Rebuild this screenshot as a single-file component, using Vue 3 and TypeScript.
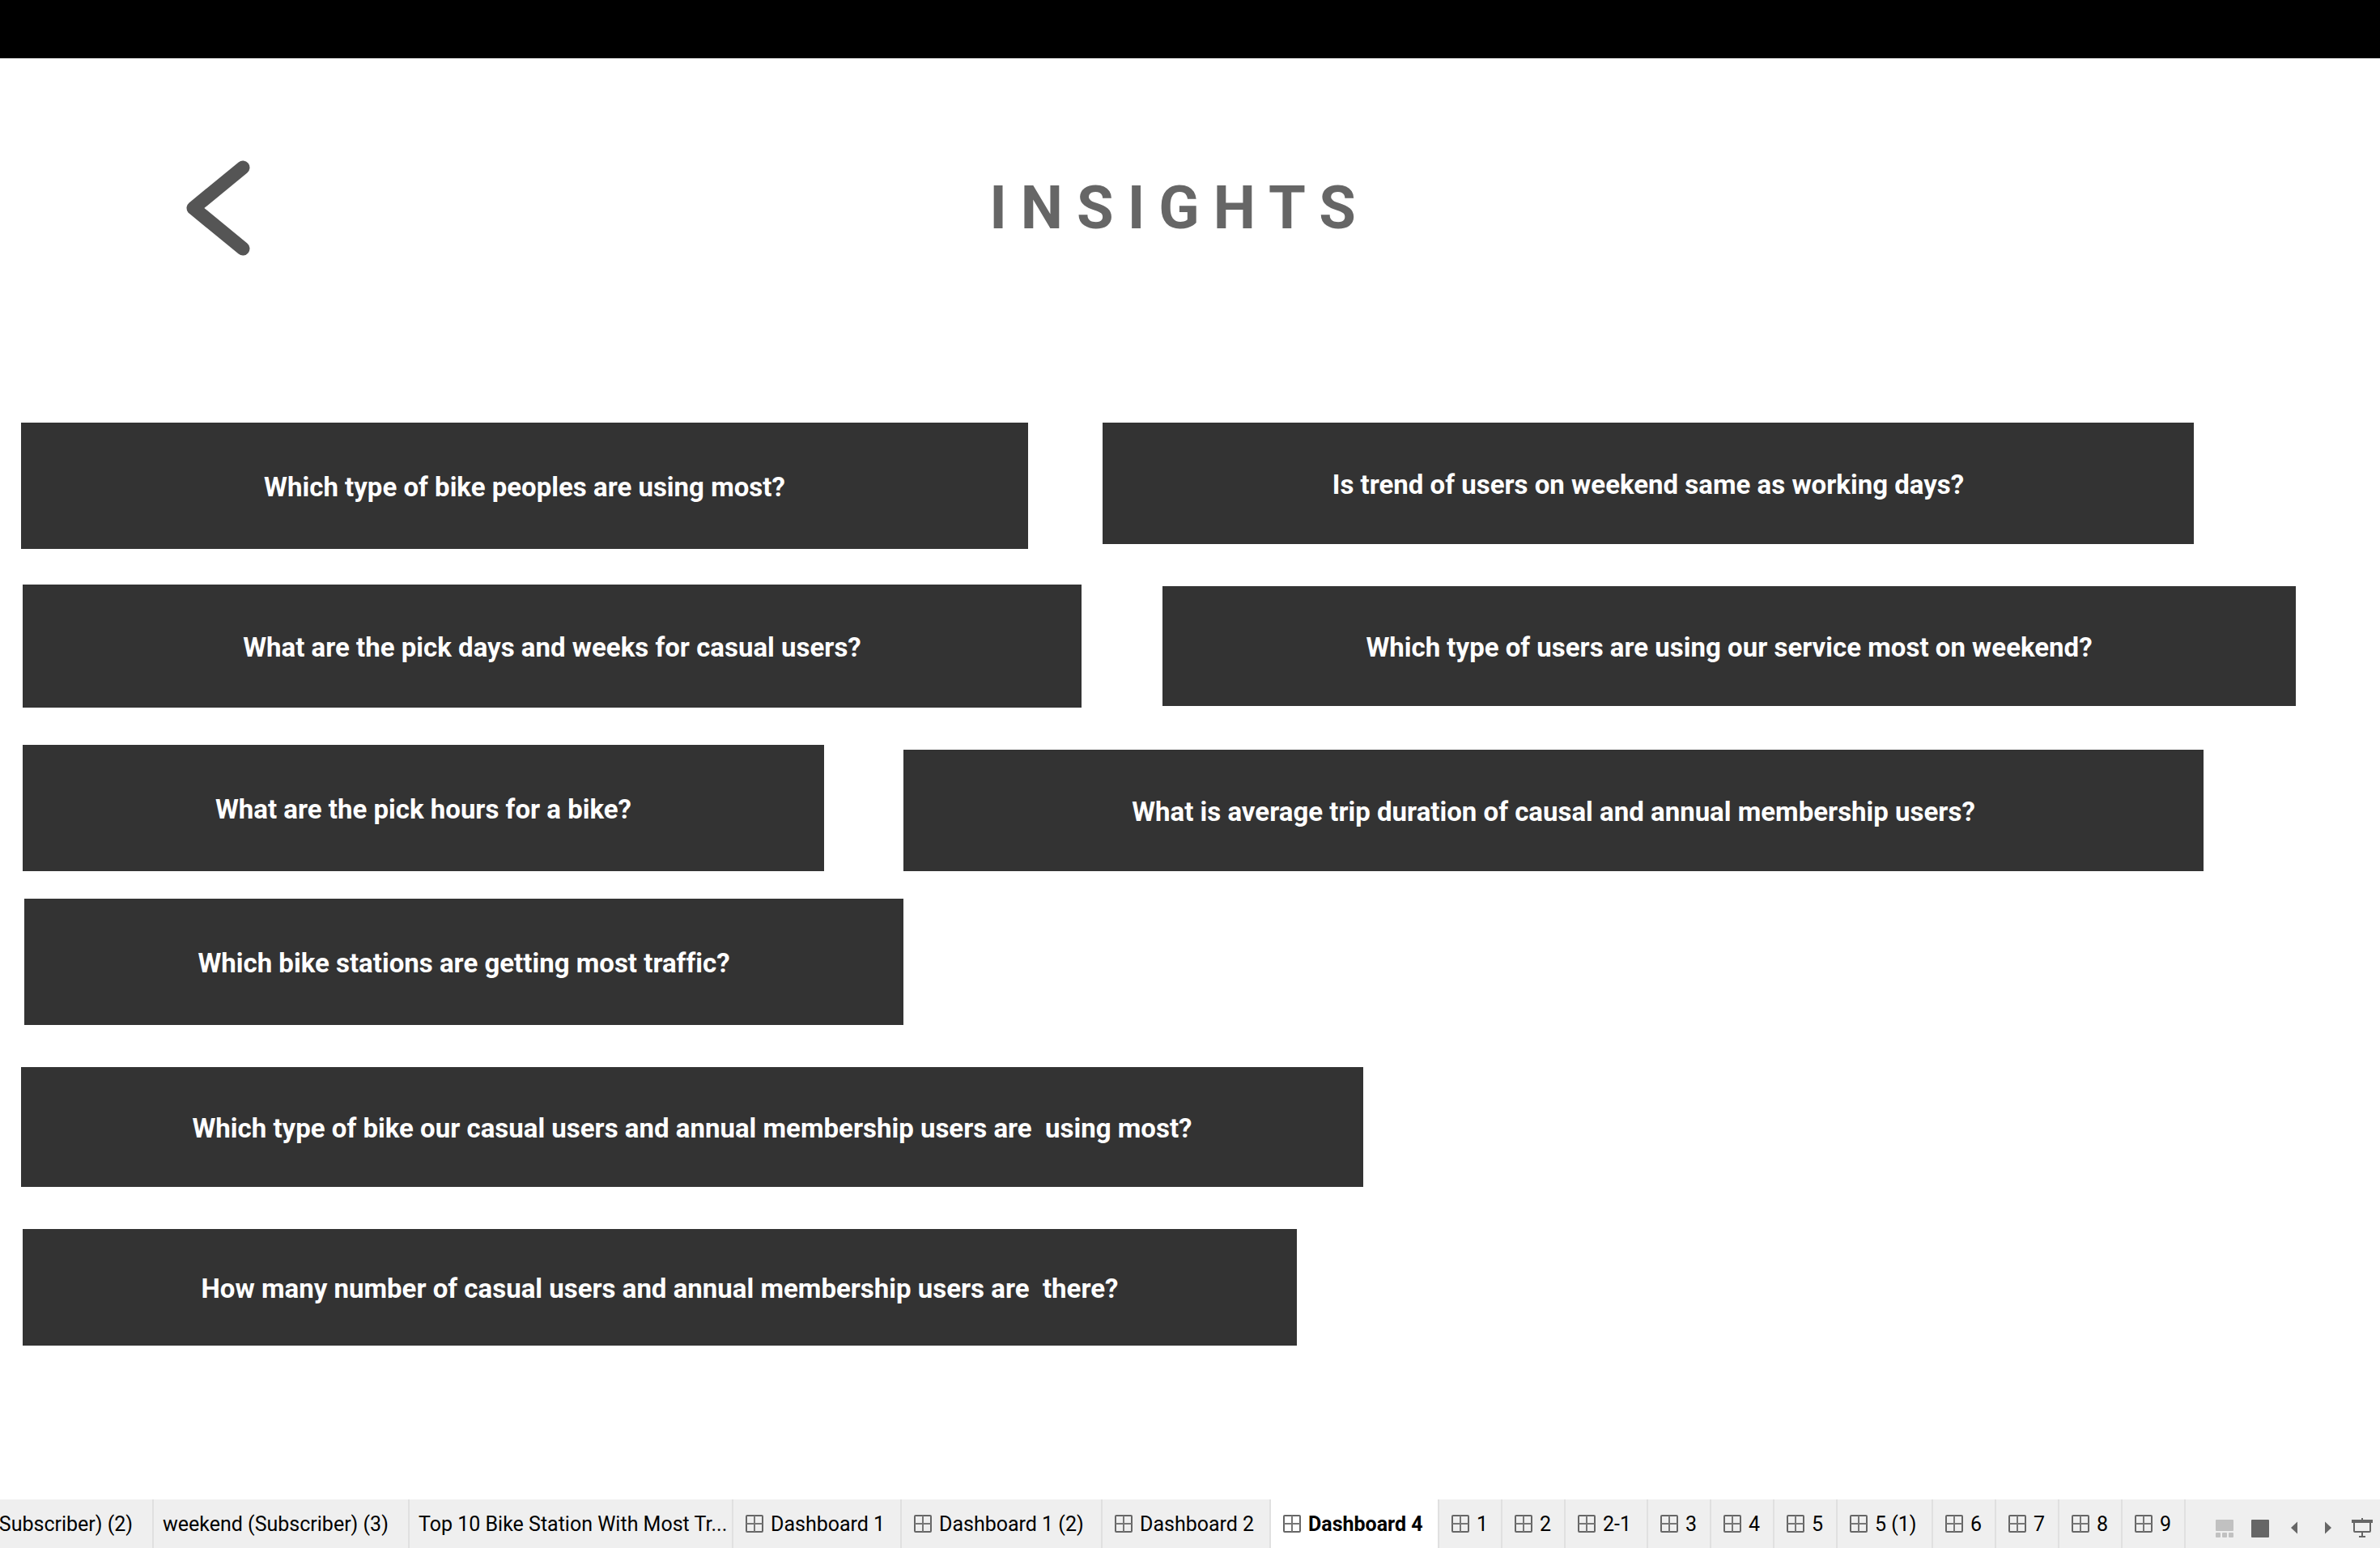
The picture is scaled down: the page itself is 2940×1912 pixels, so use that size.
<script setup lang="ts">
interface Tab {
  label: string
  width: number
  sheet?: boolean
  active?: boolean
}

interface Row {
  name: string
  questions: string[]
}

const rows: Row[] = [
  { name: 'row-bikes', questions: ['Which type of bike peoples are using most?', 'Is trend of users on weekend same as working days?'] },
  { name: 'row-days', questions: ['What are the pick days and weeks for casual users?', 'Which type of users are using our service most on weekend?'] },
  { name: 'row-hours', questions: ['What are the pick hours for a bike?', 'What is average trip duration of causal and annual membership users?'] },
  { name: 'row-stations', questions: ['Which bike stations are getting most traffic?'] },
  { name: 'row-members', questions: ['Which type of bike our casual users and annual membership users are  using most?'] },
  { name: 'row-count', questions: ['How many number of casual users and annual membership users are  there?'] },
]

const tabs: Tab[] = [
  { label: 'Subscriber) (2)', width: 190, sheet: true },
  { label: 'weekend (Subscriber) (3)', width: 316, sheet: true },
  { label: 'Top 10 Bike Station With Most Tr...', width: 400, sheet: true },
  { label: 'Dashboard 1', width: 208 },
  { label: 'Dashboard 1 (2)', width: 248 },
  { label: 'Dashboard 2', width: 208 },
  { label: 'Dashboard 4', width: 208, active: true },
  { label: '1', width: 78 },
  { label: '2', width: 78 },
  { label: '2-1', width: 102 },
  { label: '3', width: 78 },
  { label: '4', width: 78 },
  { label: '5', width: 78 },
  { label: '5 (1)', width: 118 },
  { label: '6', width: 78 },
  { label: '7', width: 78 },
  { label: '8', width: 78 },
  { label: '9', width: 78 },
]
</script>

<template>
  <div class="page">
    <div class="top-band"></div>
    <header class="header">
      <button class="back" aria-label="Back">
        <svg width="84" height="120" viewBox="0 0 84 120">
          <path d="M72 10L11 60L72 110" fill="none" stroke="#555" stroke-width="17" stroke-linecap="round" stroke-linejoin="round" />
        </svg>
      </button>
      <h1 class="title">INSIGHTS</h1>
    </header>

    <main class="board">
      <div v-for="row in rows" :key="row.name" class="row" :class="row.name">
        <button v-for="q in row.questions" :key="q" class="question">{{ q }}</button>
      </div>
    </main>

    <footer class="tab-bar">
      <nav class="tabs" aria-label="Sheets">
        <button
          v-for="tab in tabs"
          :key="tab.label"
          class="tab"
          :class="{ sheet: tab.sheet, active: tab.active }"
          :style="{ width: tab.width + 'px' }"
        >
          <svg v-if="!tab.sheet" width="22" height="22" viewBox="0 0 22 22">
            <rect x="1" y="1" width="20" height="20" rx="1" fill="none" stroke="#666" stroke-width="2" />
            <path d="M11 1V21M1 11H21" stroke="#777" stroke-width="2" />
          </svg>
          <span>{{ tab.label }}</span>
        </button>
      </nav>
      <div class="tools">
        <button class="tool" aria-label="Filmstrip">
          <svg width="22" height="22" viewBox="0 0 22 22" fill="#c1c1c1">
            <rect width="22" height="14" rx="1" />
            <rect y="16" width="6" height="6" rx="1" />
            <rect x="8" y="16" width="6" height="6" rx="1" />
            <rect x="16" y="16" width="6" height="6" rx="1" />
          </svg>
        </button>
        <button class="tool" aria-label="Show tabs">
          <svg width="22" height="22" viewBox="0 0 22 22"><rect width="22" height="22" rx="1" fill="#666" /></svg>
        </button>
        <button class="tool" aria-label="Previous sheet">
          <svg width="20" height="22" viewBox="0 0 20 22"><path d="M13 2.500V17.500L5 10Z" fill="#666" /></svg>
        </button>
        <button class="tool" aria-label="Next sheet">
          <svg width="20" height="22" viewBox="0 0 20 22"><path d="M5 2.500V17.500L13 10Z" fill="#666" /></svg>
        </button>
        <button class="tool present" aria-label="Presentation mode">
          <svg width="26" height="24" viewBox="0 0 26 24">
            <path d="M12 0h2v2h12v4H0V2h12z" fill="#666" />
            <path d="M3 5V16a1 1 0 0 0 1 1H22a1 1 0 0 0 1-1V5M13 17V23M9 23H17" fill="none" stroke="#666" stroke-width="2" />
          </svg>
        </button>
      </div>
    </footer>
  </div>
</template>

<style>
body {
  margin: 0;
  background: #fff;
}
</style>

<style scoped>
.page {
  display: flex;
  flex-direction: column;
  min-height: 100vh;
  overflow: hidden;
  font-family: "Roboto", "Liberation Sans", sans-serif;
}

button {
  margin: 0;
  padding: 0;
  border: 0;
  font-family: inherit;
  cursor: pointer;
}

svg {
  display: block;
  flex: none;
}

.top-band {
  height: 72px;
  background: #000;
}

.header {
  display: grid;
  grid-template-columns: 1fr auto 1fr;
  align-items: center;
  height: 370px;
  padding-right: 26px;
}

.back {
  justify-self: start;
  margin-left: 228px;
  background: none;
}

.title {
  margin: 0;
  font-size: 74px;
  line-height: 88px;
  font-weight: 700;
  letter-spacing: 17px;
  color: #666;
}

.board {
  flex: 1;
  padding: 80px 0;
}

.row {
  display: grid;
}

.question {
  height: 150px;
  padding-top: 2px;
  background: #333;
  color: #fff;
  font-size: 33px;
  font-weight: 700;
  font-variant-ligatures: none;
  white-space: pre;
}

.row-bikes {
  grid-template-columns: 1244fr 1348fr;
  column-gap: 92px;
  align-items: start;
  margin: 0 230px 44px 26px;
}

.row-days {
  grid-template-columns: 1308fr 1400fr;
  column-gap: 100px;
  align-items: center;
  margin: 0 104px 46px 28px;
}

.row-hours {
  grid-template-columns: 990fr 1606fr;
  column-gap: 98px;
  align-items: end;
  margin: 0 218px 34px 28px;
}

.row-stations {
  grid-template-columns: 1086fr 1824fr;
  margin: 0 0 52px 30px;
}

.row-members {
  grid-template-columns: 1658fr 1256fr;
  margin: 0 0 52px 26px;
}

.row-count {
  grid-template-columns: 1574fr 1338fr;
  margin: 0 0 0 28px;
}

.row-bikes .question:first-child,
.row-hours .question:first-child,
.row-stations .question {
  height: 156px;
}

.row-days .question:first-child {
  height: 152px;
}

.row-days .question:last-child,
.row-members .question {
  height: 148px;
}

.row-count .question {
  height: 144px;
}

.tab-bar {
  display: flex;
  justify-content: space-between;
  height: 60px;
  background: #efefef;
}

.tabs {
  display: flex;
}

.tab {
  display: flex;
  flex: none;
  align-items: center;
  gap: 9px;
  box-sizing: border-box;
  padding-left: 15px;
  border-right: 2px solid #e0e0e0;
  background: #efefef;
  color: #000;
  font-size: 25px;
  white-space: nowrap;
}

.tab.sheet {
  padding-left: 11px;
}

.tab.sheet:first-child {
  justify-content: flex-end;
  padding-right: 24px;
}

.tab.active {
  background: #fff;
  font-weight: 700;
}

.tools {
  display: flex;
  align-items: flex-end;
  gap: 22px;
  padding: 0 9px 13px 0;
}

.tool {
  background: none;
}

.present {
  margin-left: -4px;
}
</style>
